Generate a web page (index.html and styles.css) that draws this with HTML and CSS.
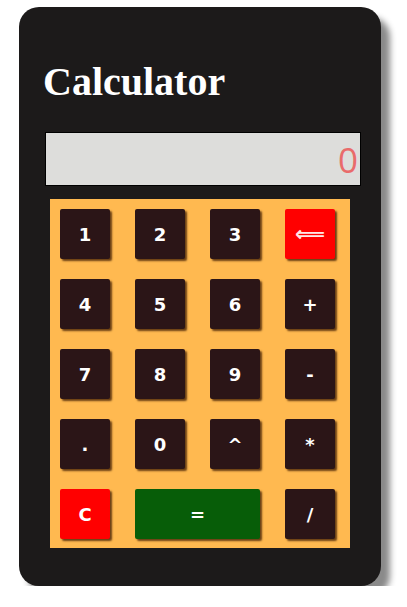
FILE: index.html
```html
<!DOCTYPE html>
<html>
<head>
<meta charset="utf-8">
<link rel="stylesheet" href="styles.css">
</head>
<body>
<div class="card">
  <h1 class="title">Calculator</h1>
  <div class="display"><span class="value">0</span></div>
  <div class="keypad">
    <div class="key">1</div>
    <div class="key">2</div>
    <div class="key">3</div>
    <div class="key red arrow">&#x27F8;</div>
    <div class="key">4</div>
    <div class="key">5</div>
    <div class="key">6</div>
    <div class="key">+</div>
    <div class="key">7</div>
    <div class="key">8</div>
    <div class="key">9</div>
    <div class="key">-</div>
    <div class="key">.</div>
    <div class="key">0</div>
    <div class="key">^</div>
    <div class="key">*</div>
    <div class="key red">C</div>
    <div class="key green wide">=</div>
    <div class="key">/</div>
  </div>
</div>
</body>
</html>
```
FILE: styles.css
```css
html, body {
  margin: 0;
  padding: 0;
  background: #ffffff;
}
body {
  padding: 7px 0 0 19px;
}
.card {
  width: 362px;
  height: 579px;
  box-sizing: border-box;
  padding: 52px 21px 38px 26px;
  background: #1c1a1a;
  border-radius: 20px;
  box-shadow: 9px 10px 6px #8a8a8a;
}
.title {
  margin: 0 0 27px -2px;
  font-family: "Liberation Serif", "Times New Roman", serif;
  font-weight: bold;
  font-size: 40px;
  line-height: 46px;
  color: #ffffff;
}
.display {
  width: 316px;
  height: 54px;
  box-sizing: border-box;
  border: 1px solid #000000;
  background: #dddddb;
  display: flex;
  align-items: center;
  justify-content: flex-end;
  padding-right: 2px;
}
.value {
  font-family: "Open Sans", "DejaVu Sans", sans-serif;
  font-size: 35px;
  color: #e96b6b;
  line-height: 1;
}
.keypad {
  margin: 13px 0 0 5px;
  width: 300px;
  height: 349px;
  box-sizing: border-box;
  padding: 10px 15px 9px 10px;
  background: #ffb950;
  display: grid;
  grid-template-columns: repeat(4, 50px);
  grid-auto-rows: 50px;
  column-gap: 25px;
  row-gap: 20px;
}
.key {
  background: #2b1517;
  color: #ffffff;
  font-family: "DejaVu Sans", Verdana, sans-serif;
  font-weight: bold;
  font-size: 18px;
  display: flex;
  align-items: center;
  justify-content: center;
  box-shadow: 2px 2px 2px #6a3f14;
  border-radius: 2px;
}
.red {
  background: #ff0000;
}
.green {
  background: #075d08;
}
.wide {
  grid-column: span 2;
}
.arrow {
  font-weight: bold;
  color: #ffe6e6;
  font-size: 21px;
}
```
